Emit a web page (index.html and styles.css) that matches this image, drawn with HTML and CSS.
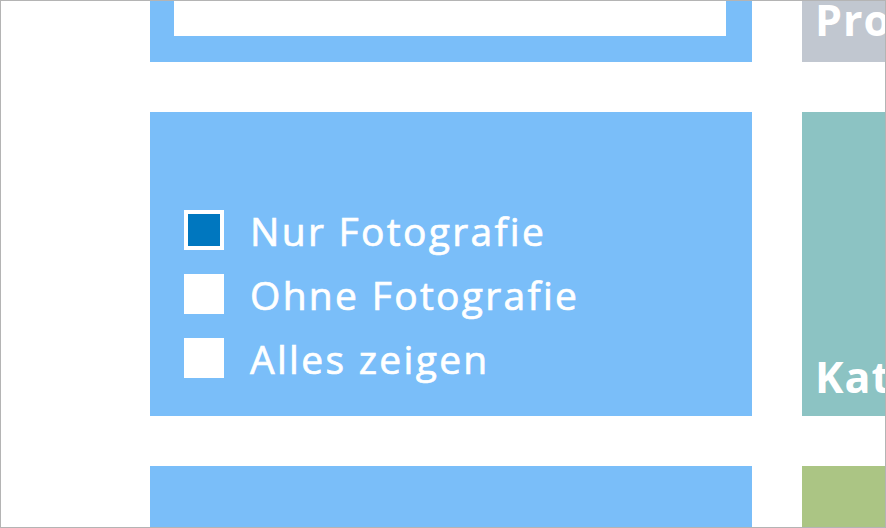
FILE: index.html
```html
<!DOCTYPE html>
<html lang="de">
<head>
<meta charset="utf-8">
<title>Filter</title>
<link rel="stylesheet" href="styles.css">
</head>
<body>
<div class="frame">
  <div class="grid">
    <div class="panel panel-top"><div class="inner-box"></div></div>
    <div class="side side-gray"><span class="side-label side-label-top">Pro</span></div>

    <div class="panel panel-filter">
      <ul class="options">
        <li class="option"><span class="box box-checked"></span><span class="label">Nur Fotografie</span></li>
        <li class="option"><span class="box"></span><span class="label">Ohne Fotografie</span></li>
        <li class="option"><span class="box"></span><span class="label">Alles zeigen</span></li>
      </ul>
    </div>
    <div class="side side-teal"><span class="side-label side-label-bottom">Kat</span></div>

    <div class="panel panel-bottom"></div>
    <div class="side side-green"></div>
  </div>
</div>
</body>
</html>
```

FILE: styles.css
```css
* { box-sizing: border-box; }
html, body { margin: 0; padding: 0; background: #ffffff; }
body { font-family: "Open Sans", "Liberation Sans", sans-serif; }

.frame {
  width: 886px;
  height: 528px;
  border: 1px solid #b4b4b4;
  overflow: hidden;
  background: #ffffff;
}

.grid {
  display: grid;
  grid-template-columns: 602px 120px;
  grid-template-rows: 61px 304px 120px;
  column-gap: 50px;
  row-gap: 50px;
  padding-left: 149px;
}

.panel { background: #7abef9; }

.panel-top {
  display: flex;
  align-items: flex-end;
  padding: 0 26px 26px 24px;
}
.inner-box {
  width: 100%;
  height: 60px;
  background: #ffffff;
}

.panel-filter {
  padding: 98px 0 0 34px;
}

.options {
  list-style: none;
  margin: 0;
  padding: 0;
  display: flex;
  flex-direction: column;
  gap: 24px;
}
.option {
  display: flex;
  align-items: center;
  gap: 26px;
  height: 40px;
}
.box {
  width: 40px;
  height: 40px;
  flex: none;
  background: #ffffff;
}
.box-checked {
  border: 4px solid #ffffff;
  background: #0077bf;
}
.label {
  color: #ffffff;
  font-size: 39px;
  font-weight: 400;
  -webkit-text-stroke: 0.7px #ffffff;
  letter-spacing: 2.3px;
  line-height: 40px;
  white-space: nowrap;
  position: relative;
  top: 1px;
}

.side {
  display: flex;
  padding-left: 13px;
  overflow: hidden;
}
.side-gray { background: #c1c7d0; align-items: flex-end; }
.side-teal { background: #8cc3c3; align-items: flex-end; }
.side-green { background: #abc584; }

.side-label {
  color: #ffffff;
  font-weight: 700;
  font-size: 43px;
  line-height: 1;
  letter-spacing: 1px;
  white-space: nowrap;
}
.side-label-top { padding-bottom: 21px; }
.side-label-bottom { padding-bottom: 18px; }
```
